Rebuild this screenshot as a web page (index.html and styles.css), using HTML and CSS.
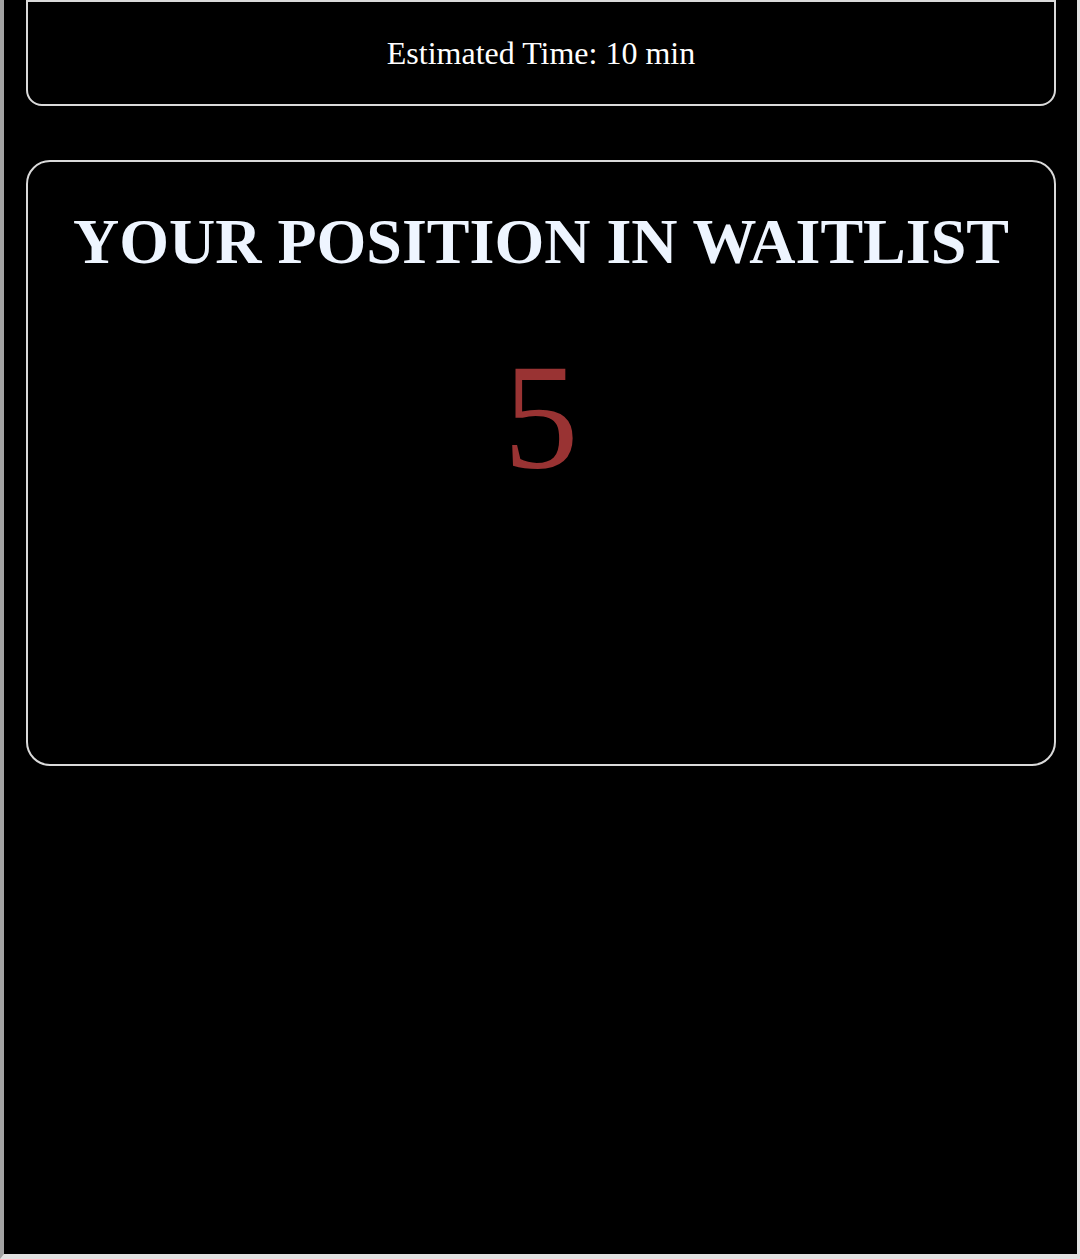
FILE: index.html
```html
<!DOCTYPE html>
<html>
<head>
<meta charset="utf-8">
<link rel="stylesheet" href="styles.css">
</head>
<body>
<div class="frame">
  <section class="card card-time">
    <p class="time">Estimated Time: 10 min</p>
  </section>
  <section class="card card-position">
    <h1 class="title">YOUR POSITION IN WAITLIST</h1>
    <div class="number">5</div>
  </section>
</div>
</body>
</html>
```
FILE: styles.css
```css
html, body {
  margin: 0;
  padding: 0;
  background: #000;
}
body {
  font-family: "Liberation Serif", "Times New Roman", serif;
}
.frame {
  box-sizing: border-box;
  height: 1259px;
  overflow: hidden;
  background: #000;
  border-left: 4px solid #a3a3a3;
  border-right: 3px solid #e3e3e3;
  border-bottom: 5px solid #e3e3e3;
  padding: 0 21px 0 22px;
  display: flex;
  flex-direction: column;
  gap: 54px;
}
.card {
  border: 2px solid #dadada;
  box-sizing: border-box;
}
.card-time {
  height: 106px;
  border-radius: 0 0 16px 16px;
  display: flex;
  align-items: center;
  justify-content: center;
}
.time {
  margin: 0;
  color: #fff;
  font-size: 32px;
}
.card-position {
  height: 606px;
  border-radius: 24px;
  display: flex;
  flex-direction: column;
  align-items: center;
}
.title {
  margin: 43px 0 0;
  color: #eef5ff;
  font-size: 64px;
  font-weight: bold;
  line-height: 1.15;
}
.number {
  margin-top: 52px;
  color: #993333;
  font-size: 150px;
  line-height: 1.15;
}
```
